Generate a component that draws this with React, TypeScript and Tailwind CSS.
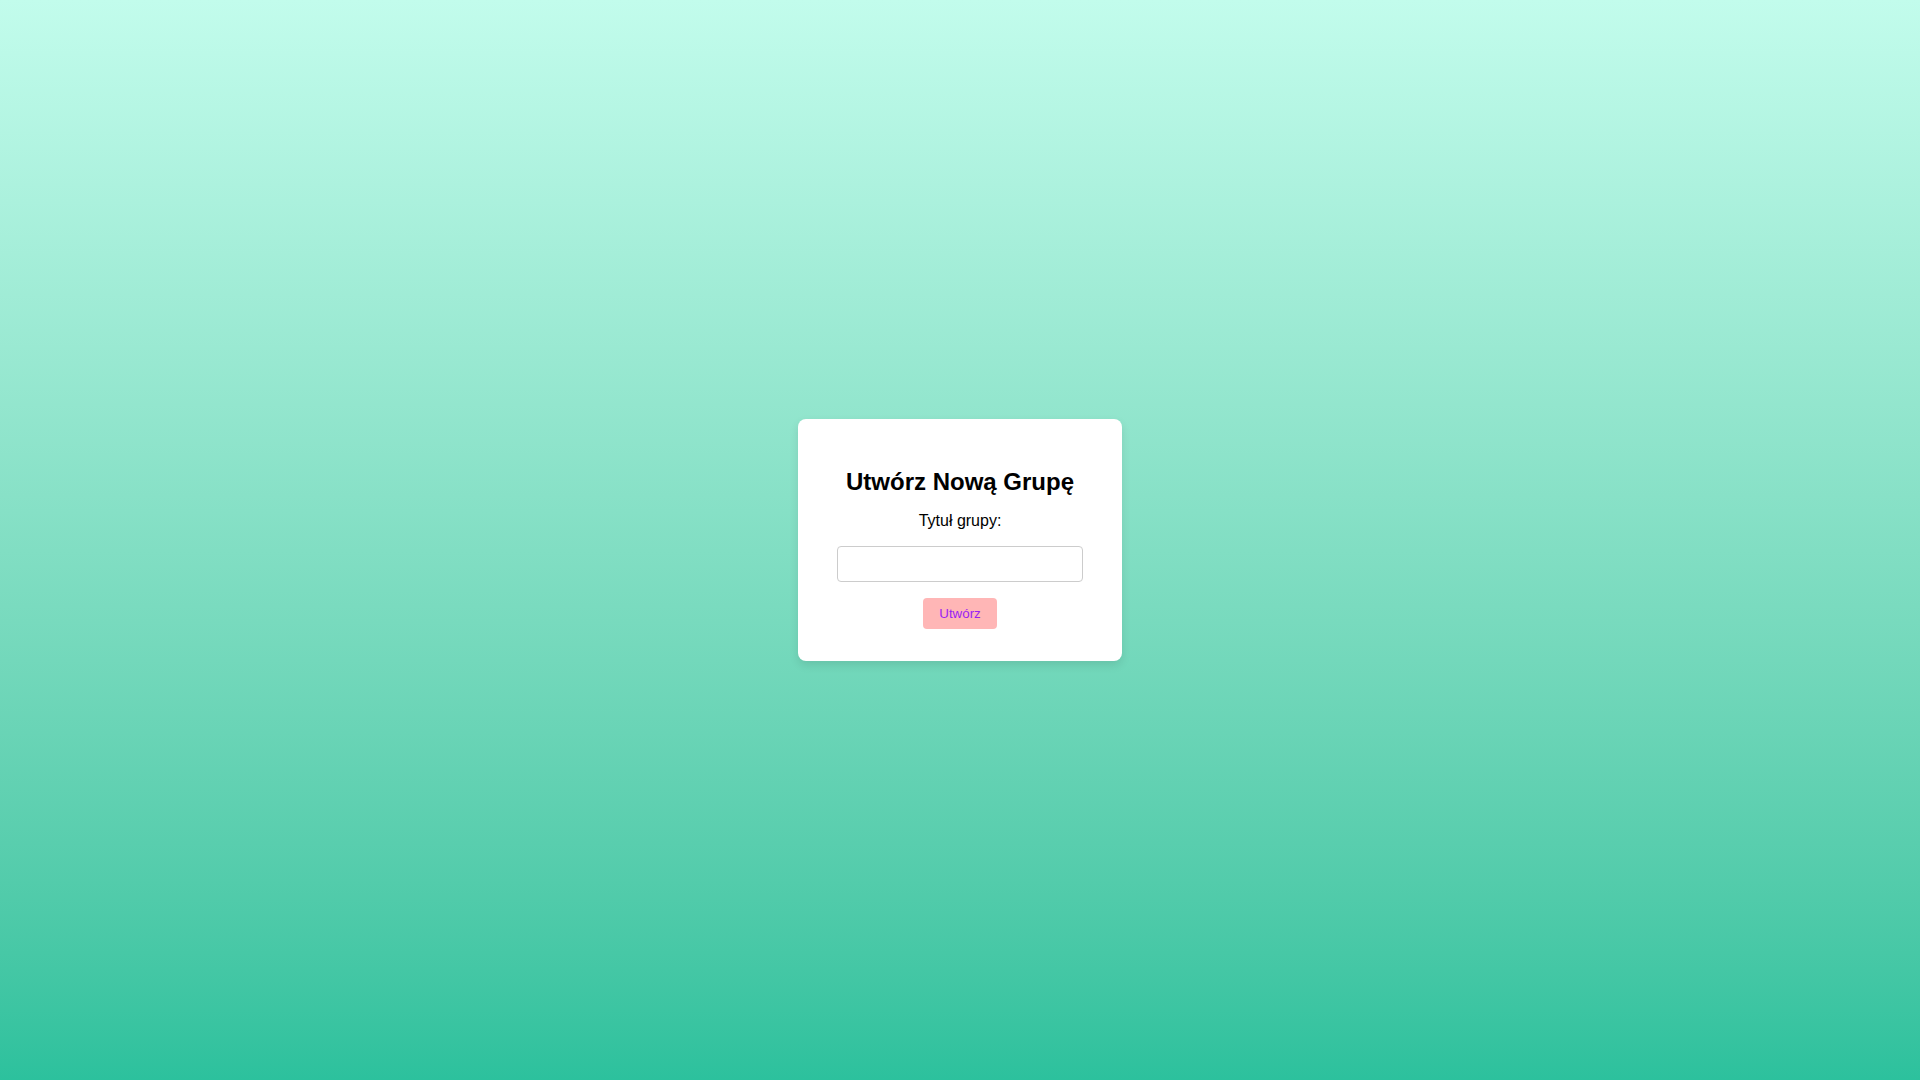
import React from "react";

export default function App() {
  return (
    <div
      className="min-h-screen w-full flex items-center justify-center bg-gradient-to-b from-[#c2fcec] to-[#2cc19d]"
      style={{ fontFamily: '"Liberation Sans", Arial, sans-serif' }}
    >
      <div className="w-[324px] bg-white rounded-[8px] shadow-[0_4px_10px_rgba(0,0,0,0.1)] px-8 pt-8 pb-8 flex flex-col items-center">
        <h2 className="mt-[17px] text-[24px] leading-[28px] font-bold text-black">Utwórz Nową Grupę</h2>
        <label className="mt-[16px] text-[16px] leading-[18px] text-black">Tytuł grupy:</label>
        <input
          type="text"
          className="mt-[16px] w-[246px] h-[36px] border border-[#cccccc] rounded-[4px] bg-white px-2 text-[16px] outline-none"
        />
        <button className="mt-[16px] h-[31px] px-4 bg-[#ffb6b6] text-[#9b1ff3] text-[13.33px] leading-[15px] rounded-[4px]">
          Utwórz
        </button>
      </div>
    </div>
  );
}
